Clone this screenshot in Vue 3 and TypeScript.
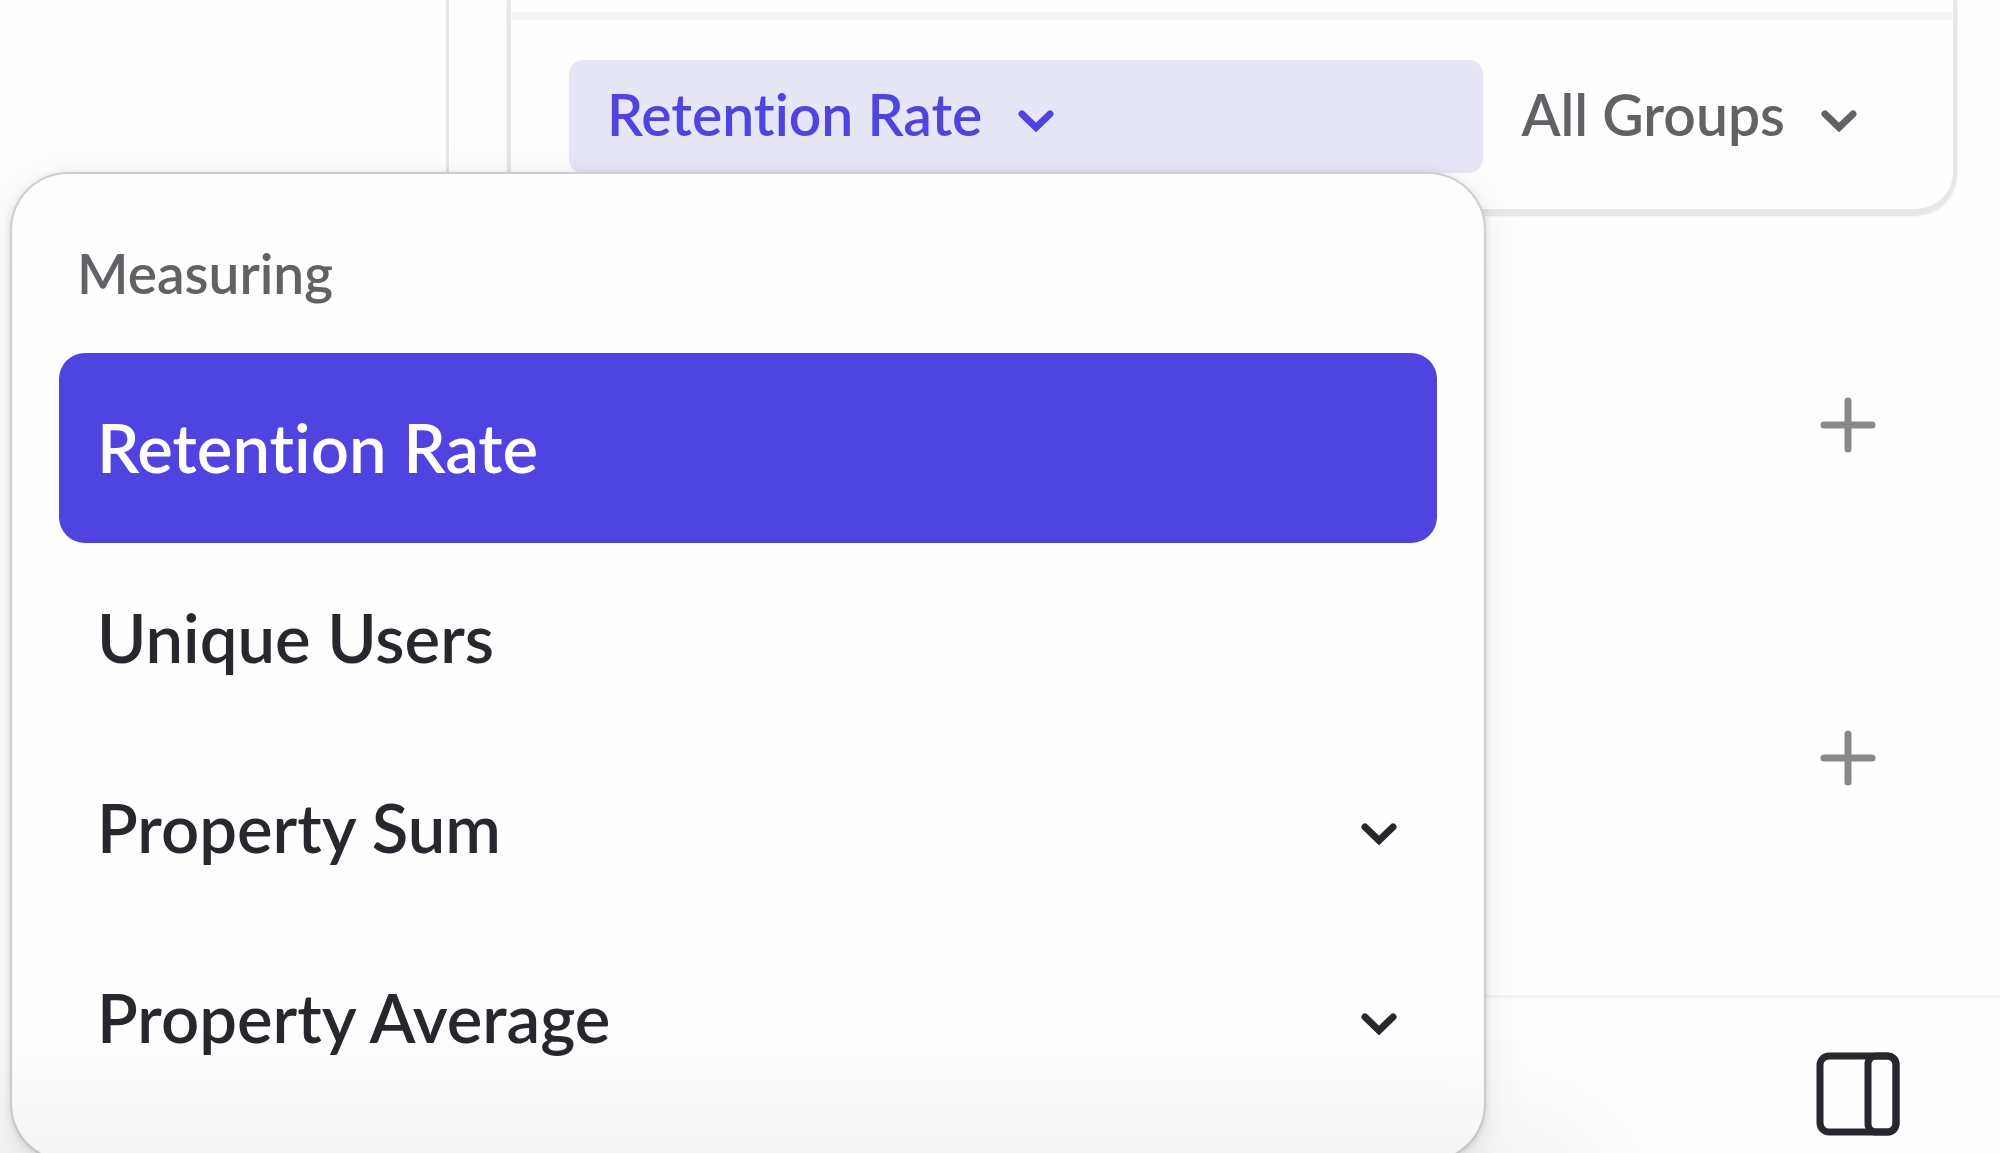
<script setup lang="ts">
import { ref } from 'vue'

interface Measure {
  label: string
  expandable: boolean
}

const measures: Measure[] = [
  { label: 'Retention Rate', expandable: false },
  { label: 'Unique Users', expandable: false },
  { label: 'Property Sum', expandable: true },
  { label: 'Property Average', expandable: true },
]

const sections: string[] = ['Add filter', 'Add breakdown']

const selected = ref<string>('Retention Rate')
</script>

<template>
  <main class="page">
    <section class="builder">
      <div class="card">
        <div class="controls">
          <button class="control control-active" type="button" aria-haspopup="menu" aria-expanded="true">
            <span>{{ selected }}</span>
            <svg class="chevron" viewBox="0 0 36 22" aria-hidden="true">
              <path d="M4 4 L18 17.5 L32 4" />
            </svg>
          </button>
          <button class="control" type="button" aria-haspopup="menu">
            <span>All Groups</span>
            <svg class="chevron" viewBox="0 0 36 22" aria-hidden="true">
              <path d="M4 4 L18 17.5 L32 4" />
            </svg>
          </button>
        </div>
      </div>

      <div class="sections">
        <div v-for="name in sections" :key="name" class="section">
          <button class="add" type="button" :aria-label="name">
            <svg viewBox="0 0 56 56" aria-hidden="true">
              <path d="M28 4 V52 M4 28 H52" />
            </svg>
          </button>
        </div>
      </div>

      <footer class="footer">
        <button class="panel-toggle" type="button" aria-label="Toggle side panel">
          <svg viewBox="0 0 84 84" aria-hidden="true">
            <rect x="4" y="4" width="76" height="76" rx="9" />
            <rect x="52" y="4" width="28" height="76" rx="8" />
          </svg>
        </button>
      </footer>
    </section>

    <div class="menu" role="menu" aria-labelledby="menu-title">
      <h2 id="menu-title" class="menu-title">Measuring</h2>
      <button
        v-for="item in measures"
        :key="item.label"
        class="item"
        :class="{ 'item-selected': item.label === selected }"
        type="button"
        role="menuitem"
        @click="selected = item.label"
      >
        <span>{{ item.label }}</span>
        <svg v-if="item.expandable" class="chevron" viewBox="0 0 36 22" aria-hidden="true">
          <path d="M4 4 L18 17.5 L32 4" />
        </svg>
      </button>
    </div>

    <div class="fade" aria-hidden="true"></div>
  </main>
</template>

<style>
body {
  margin: 0;
  background: #fefefe;
}
</style>

<style scoped>
.page {
  position: relative;
  box-sizing: border-box;
  height: 100vh;
  overflow: hidden;
  padding-left: 446px;
  background: #fefefe;
  color: #28272e;
  font-family: Lato, "Liberation Sans", sans-serif;
  font-weight: 600;
  font-variant-ligatures: none;
}

button {
  box-sizing: border-box;
  margin: 0;
  border: 0;
  background: none;
  color: inherit;
  font: inherit;
  font-variant-ligatures: inherit;
  text-align: left;
  cursor: pointer;
}

svg {
  display: block;
  flex: none;
  fill: none;
  stroke: currentColor;
  stroke-linecap: round;
}

.builder {
  display: flex;
  flex-direction: column;
  box-sizing: border-box;
  height: 100%;
  border-left: 3px solid #e6e6e6;
}

.card {
  margin: 0 43px 0 58px;
  padding-top: 12px;
  border: solid #e7e7e8;
  border-width: 0 4px 6px;
  border-radius: 0 0 42px 42px;
  box-shadow: 0 1px 2px rgba(0, 0, 0, 0.12);
}

.controls {
  display: grid;
  grid-template-columns: 11fr 5fr;
  padding: 40px 54px 36px 58px;
  border-top: 8px solid #f6f6f6;
}

.control {
  display: flex;
  align-items: center;
  gap: 36px;
  height: 113px;
  padding: 0 38px 6px;
  border-radius: 14px;
  color: #626266;
  font-size: 57px;
  line-height: 68px;
  white-space: nowrap;
}

.control-active {
  background: #e7e6f6;
  color: #4f44e0;
}

.chevron {
  width: 36px;
  height: 22px;
  margin-top: 14px;
  stroke-width: 7px;
}

.sections {
  display: flex;
  flex: 1;
  flex-direction: column;
  padding-top: 43px;
}

.section {
  display: flex;
  align-items: center;
  justify-content: flex-end;
  height: 333px;
  padding-right: 124px;
}

.add {
  padding: 0;
  color: #89898b;
}

.add svg {
  width: 56px;
  height: 56px;
  stroke-width: 7px;
}

.footer {
  display: flex;
  justify-content: flex-end;
  box-sizing: border-box;
  height: 158px;
  padding: 54px 100px 0 0;
  border-top: 3px solid #f4f4f5;
}

.panel-toggle {
  height: 84px;
  padding: 0;
}

.panel-toggle svg {
  width: 84px;
  height: 84px;
  stroke-width: 7px;
}

.menu {
  position: absolute;
  top: 174px;
  right: 516px;
  left: 12px;
  box-sizing: border-box;
  padding: 47px;
  border-radius: 56px;
  background: #fefefe;
  box-shadow:
    0 0 0 2px #cdcdd2,
    0 2px 10px rgba(0, 0, 0, 0.18),
    0 8px 44px rgba(0, 0, 0, 0.09);
}

.menu-title {
  box-sizing: border-box;
  height: 132px;
  margin: 0;
  padding: 16px 0 0 18px;
  color: #626266;
  font-size: 55px;
  font-weight: 600;
  line-height: 72px;
}

.item {
  display: flex;
  align-items: center;
  justify-content: space-between;
  width: 100%;
  height: 190px;
  padding: 0 40px 2px 38px;
  border-radius: 26px;
  font-size: 67px;
  line-height: 80px;
}

.item-selected {
  background: #4f44e0;
  color: #ffffff;
}

/* Shadow rising from the content below the fold */
.fade {
  position: absolute;
  top: 100%;
  right: 460px;
  left: -160px;
  height: 200px;
  box-shadow: 0 40px 150px 30px rgba(0, 0, 0, 0.11);
  pointer-events: none;
}
</style>
